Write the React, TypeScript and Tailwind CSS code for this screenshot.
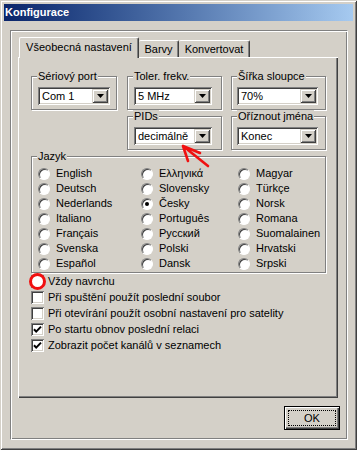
import React from "react";

const columns = [
  ["English", "Deutsch", "Nederlands", "Italiano", "Français", "Svenska", "Español"],
  ["Ελληνικά", "Slovensky", "Česky", "Português", "Русский", "Polski", "Dansk"],
  ["Magyar", "Türkçe", "Norsk", "Romana", "Suomalainen", "Hrvatski", "Srpski"],
];

const options = [
  { label: "Vždy navrchu", on: false, marked: true },
  { label: "Při spuštění použít poslední soubor", on: false },
  { label: "Při otevírání použít osobní nastavení pro satelity", on: false },
  { label: "Po startu obnov poslední relaci", on: true },
  { label: "Zobrazit počet kanálů v seznamech", on: true },
];

function Combo({ value, className }: { value: string; className: string }) {
  return (
    <div
      className={`flex h-[18px] items-center bg-white p-[2px] shadow-[inset_1px_1px_#808080,inset_-1px_-1px_#ffffff,inset_2px_2px_#404040,inset_-2px_-2px_#d4d0c8] ${className}`}
    >
      <span className="flex-1 truncate pl-[2px]">{value}</span>
      <span className="flex h-[14px] w-[16px] items-center justify-center bg-[#d4d0c8] shadow-[inset_1px_1px_#d4d0c8,inset_-1px_-1px_#404040,inset_2px_2px_#ffffff,inset_-2px_-2px_#808080]">
        <svg width="7" height="4" viewBox="0 0 7 4">
          <path d="M0 0h7L3.5 4z" fill="#000" />
        </svg>
      </span>
    </div>
  );
}

// group box: padding lives on the inner div so the legend keeps its place
function Group({
  title,
  className,
  inner,
  children,
}: {
  title: string;
  className?: string;
  inner: string;
  children: React.ReactNode;
}) {
  return (
    <fieldset
      className={`min-w-0 border border-[#808080] shadow-[inset_1px_1px_#ffffff,1px_1px_#ffffff] ${className ?? ""}`}
    >
      <legend className="ml-[5px] bg-[#d4d0c8] px-px leading-[13px]">{title}</legend>
      <div className={inner}>{children}</div>
    </fieldset>
  );
}

function Radio({ label, on }: { label: string; on?: boolean }) {
  return (
    <div className="flex h-[15px] items-center gap-[6px]">
      <span className="flex h-[12px] w-[12px] items-center justify-center rounded-full border border-t-[#808080] border-l-[#808080] border-r-white border-b-white bg-white shadow-[inset_1px_1px_#404040]">
        {on && <span className="h-[4px] w-[4px] rounded-full bg-black" />}
      </span>
      <span>{label}</span>
    </div>
  );
}

function Check({ on }: { on: boolean }) {
  return (
    <span className="flex h-[13px] w-[13px] items-center justify-center bg-white shadow-[inset_1px_1px_#808080,inset_-1px_-1px_#ffffff,inset_2px_2px_#404040,inset_-2px_-2px_#d4d0c8]">
      {on && (
        <svg width="13" height="13" viewBox="0 0 13 13">
          <path d="M3 6.2 5.2 8.6 10 3.6" fill="none" stroke="#000" strokeWidth="2" />
        </svg>
      )}
    </span>
  );
}

export default function App() {
  return (
    <div className="relative h-[450px] w-[357px] overflow-hidden bg-[#d4d0c8] p-[4px] font-['Liberation_Sans',Arial,sans-serif] text-[11px] leading-[13px] text-black shadow-[inset_1px_1px_#d4d0c8,inset_-1px_-1px_#404040,inset_2px_2px_#ffffff,inset_-2px_-2px_#808080]">
      {/* caption */}
      <div className="flex h-[17px] items-center bg-linear-to-r from-[#0a246a] to-[#a6caf0] pl-[1px] font-bold text-white">
        Konfigurace
      </div>

      {/* etched frame */}
      <div className="ml-[6px] mt-[9px] flex h-[410px] w-[338px] flex-col border border-t-[#808080] border-l-[#808080] border-r-white border-b-white px-[7px] pb-[7px] pt-[6px] shadow-[inset_1px_1px_#ffffff,inset_-1px_-1px_#808080]">
        <div className="flex w-[320px] flex-col">
          {/* tabs */}
          <div className="flex h-[20px] items-end pl-px">
            <div className="relative z-10 -mb-px flex h-[21px] w-[120px] items-center justify-center rounded-t-[2px] border-t border-l border-r border-t-white border-l-white border-r-[#404040] bg-[#d4d0c8] pb-[2px] shadow-[inset_-1px_0_#808080]">
              Všeobecná nastavení
            </div>
            <div className="flex h-[17px] w-[40px] items-center justify-center rounded-t-[2px] border-t border-r border-t-white border-r-[#404040] shadow-[inset_-1px_0_#808080]">
              Barvy
            </div>
            <div className="flex h-[17px] w-[71px] items-center justify-center rounded-t-[2px] border-t border-r border-t-white border-r-[#404040] shadow-[inset_-1px_0_#808080]">
              Konvertovat
            </div>
          </div>

          {/* tab page */}
          <div className="h-[341px] pl-[13px] pt-[13px] shadow-[inset_1px_1px_#ffffff,inset_-1px_-1px_#404040,inset_-2px_-2px_#808080]">
            <div className="grid grid-cols-[87px_95px_95px] gap-x-[9px]">
              <Group title="Sériový port" className="w-[86px]" inner="px-[6px] pb-[4px] pt-[4px]">
                <Combo value="Com 1" className="w-full" />
              </Group>
              <Group title="Toler. frekv." inner="px-[6px] pb-[4px] pt-[4px]">
                <Combo value="5 MHz" className="w-[78px]" />
              </Group>
              <Group title="Šířka sloupce" inner="px-[5px] pb-[4px] pt-[4px]">
                <Combo value="70%" className="w-[81px]" />
              </Group>

              <Group title="PIDs" className="col-start-2" inner="px-[6px] pb-[4px] pt-[4px]">
                <Combo value="decimálně" className="w-[78px]" />
              </Group>
              <Group title="Oříznout jména" inner="px-[5px] pb-[4px] pt-[4px]">
                <Combo value="Konec" className="w-[81px]" />
              </Group>

              <Group title="Jazyk" className="col-span-3" inner="flex pb-px pl-[6px] pt-[3px]">
                {columns.map((col, i) => (
                  <div
                    key={i}
                    className={i === 0 ? "w-[103px]" : i === 1 ? "w-[97px]" : "flex-1"}
                  >
                    {col.map((l) => (
                      <Radio key={l} label={l} on={l === "Česky"} />
                    ))}
                  </div>
                ))}
              </Group>
            </div>

            {/* check boxes */}
            <div className="mt-[1px] flex flex-col">
              {options.map((o, i) => (
                <div
                  key={o.label}
                  className={`flex items-center gap-[4px] ${i === 0 ? "h-[15px]" : "h-[16px]"}`}
                >
                  <span className="relative">
                    <Check on={o.on} />
                    {o.marked && (
                      <span className="absolute -left-[2px] -top-[2px] h-[17px] w-[17px] rounded-full border-[3px] border-[#f01010] bg-white" />
                    )}
                  </span>
                  <span>{o.label}</span>
                </div>
              ))}
            </div>
          </div>
        </div>

        {/* OK button */}
        <button className="mt-[8px] flex h-[24px] w-[56px] self-end border border-black p-[3px] shadow-[inset_1px_1px_#ffffff,inset_-1px_-1px_#404040,inset_-2px_-2px_#808080]">
          <span className="flex h-full w-full items-center justify-center border border-dotted border-black">
            OK
          </span>
        </button>
      </div>

      {/* red hand-drawn arrow */}
      <svg
        className="pointer-events-none absolute left-[180px] top-[142px]"
        width="32"
        height="26"
        viewBox="0 0 32 26"
      >
        <path
          d="M3 4 28 24M3 4 20 11M3 4 8 19"
          fill="none"
          stroke="#f01010"
          strokeWidth="2.6"
          strokeLinecap="round"
        />
      </svg>
    </div>
  );
}
